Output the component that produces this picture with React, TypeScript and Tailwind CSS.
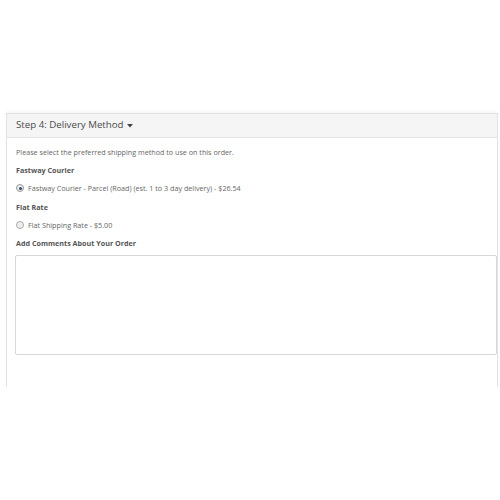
export default function App() {
  return (
    <div className="w-[500px] h-[500px] bg-white pt-[113px] pl-[6px] pr-[2px] overflow-hidden" style={{ fontFamily: '"Open Sans", sans-serif' }}>
      <div className="border border-b-0 border-[#e2e2e2] h-[274px] shadow-[0_-2px_2px_rgba(0,0,0,0.03)]">
        <div className="h-[24px] bg-[#f5f5f5] border-b border-[#e2e2e2] flex items-center pl-[9px] text-[9.7px] text-[#4a4a4a]">
          Step 4: Delivery Method
          <svg width="6" height="4" viewBox="0 0 6 4" className="ml-[3px] mt-[1px]">
            <path d="M0 0h6L3 3.5z" fill="#444" />
          </svg>
        </div>
        <div className="pl-[9px] pt-[9px] text-[7.2px] text-[#666] leading-[10px]">
          <p>Please select the preferred shipping method to use on this order.</p>
          <p className="mt-[8.2px] font-bold text-[#555]">Fastway Courier</p>
          <label className="mt-[8.2px] flex items-center gap-[4px]">
            <span className="w-[8px] h-[8px] rounded-full border border-[#999] bg-[#eee] flex items-center justify-center">
              <span className="w-[3px] h-[3px] rounded-full bg-[#2a4b6b]" />
            </span>
            Fastway Courier - Parcel (Road) (est. 1 to 3 day delivery) - $26.54
          </label>
          <p className="mt-[8.2px] font-bold text-[#555]">Flat Rate</p>
          <label className="mt-[8.2px] flex items-center gap-[4px]">
            <span className="w-[8px] h-[8px] rounded-full border border-[#aaa] bg-[#eee]" />
            Flat Shipping Rate - $5.00
          </label>
          <p className="mt-[8.2px] font-bold text-[#555]">Add Comments About Your Order</p>
          <div className="mt-[7px] -ml-[1px] h-[100px] border border-[#d8d8d8] rounded-[2px]" />
        </div>
      </div>
    </div>
  );
}
